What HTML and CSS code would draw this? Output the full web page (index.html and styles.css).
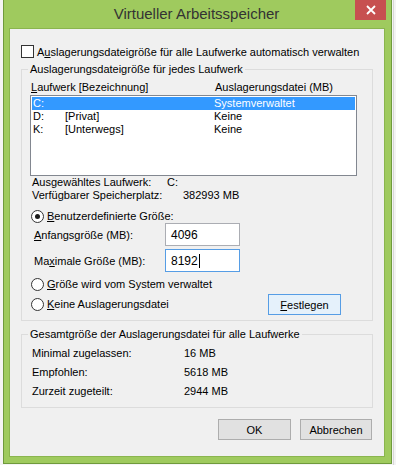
FILE: index.html
```html
<!DOCTYPE html>
<html lang="de">
<head>
<meta charset="utf-8">
<title>Virtueller Arbeitsspeicher</title>
<link rel="stylesheet" href="styles.css">
</head>
<body>
<div class="desk">
  <div class="window">
    <div class="titlebar">
      <div class="title">Virtueller Arbeitsspeicher</div>
      <div class="close"><svg width="10" height="10" viewBox="0 0 10 10"><path d="M1 1 L9 9 M9 1 L1 9" stroke="#fff" stroke-width="1.8" fill="none"/></svg></div>
    </div>
    <div class="client">
      <div class="autorow">
        <span class="checkbox"></span>
        <span>A<u>u</u>slagerungsdateigröße für alle Laufwerke automatisch verwalten</span>
      </div>

      <fieldset class="group g1">
        <legend>Auslagerungsdateigröße für jedes Laufwerk</legend>
        <div class="hdr"><span class="c1"><u>L</u>aufwerk [Bezeichnung]</span><span>Auslagerungsdatei (MB)</span></div>
        <div class="listbox">
          <div class="lrow sel"><span class="c1"><span class="drv">C:</span></span><span>Systemverwaltet</span></div>
          <div class="lrow"><span class="c1"><span class="drv">D:</span>[Privat]</span><span>Keine</span></div>
          <div class="lrow"><span class="c1"><span class="drv">K:</span>[Unterwegs]</span><span>Keine</span></div>
        </div>
        <div class="info"><span class="ilab1">Ausgewähltes Laufwerk:</span><span>C:</span></div>
        <div class="info"><span class="ilab2">Verfügbarer Speicherplatz:</span><span>382993 MB</span></div>
        <div class="radiorow r1"><span class="radio on"></span><span><u>B</u>enutzerdefinierte Größe:</span></div>
        <div class="tbrow"><span class="tblab"><u>A</u>nfangsgröße (MB):</span><span class="textbox">4096</span></div>
        <div class="tbrow t2"><span class="tblab">Ma<u>x</u>imale Größe (MB):</span><span class="textbox focus">8192<span class="caret"></span></span></div>
        <div class="radiorow r2"><span class="radio"></span><span><u>G</u>röße wird vom System verwaltet</span></div>
        <div class="lastrow">
          <div class="radiorow"><span class="radio"></span><span><u>K</u>eine Auslagerungsdatei</span></div>
          <div class="btn def"><u>F</u>estlegen</div>
        </div>
      </fieldset>

      <fieldset class="group g2">
        <legend>Gesamtgröße der Auslagerungsdatei für alle Laufwerke</legend>
        <div class="tot first"><span class="tlab">Minimal zugelassen:</span><span>16 MB</span></div>
        <div class="tot"><span class="tlab">Empfohlen:</span><span>5618 MB</span></div>
        <div class="tot"><span class="tlab">Zurzeit zugeteilt:</span><span>2944 MB</span></div>
      </fieldset>

      <div class="buttons">
        <div class="btn ok">OK</div>
        <div class="btn cancel">Abbrechen</div>
      </div>
    </div>
  </div>
  <div class="behind"></div>
</div>
</body>
</html>
```
FILE: styles.css
```css
html, body {
  margin: 0;
  padding: 0;
  background: #f4f4f4;
}
body {
  width: 396px;
  height: 465px;
  overflow: hidden;
  font-family: "Liberation Sans", Arial, sans-serif;
  font-size: 11px;
  color: #000;
}
.desk {
  display: flex;
  align-items: flex-start;
}
.window {
  margin-left: 3px;
  width: 390px;
  height: 464px;
  box-sizing: border-box;
  background: #9fca5e;
  border: 1px solid #6f9a3c;
  border-top: 0;
  padding: 0 6px 6px 5px;
}
.titlebar {
  display: grid;
  height: 28px;
  margin: 0 -6px 0 -5px;
}
.title, .close {
  grid-area: 1 / 1;
}
.title {
  text-align: center;
  font-size: 15px;
  line-height: 28px;
  color: #333;
  padding-right: 2px;
}
.close {
  justify-self: end;
  align-self: start;
  margin-right: 5px;
  width: 31px;
  height: 20px;
  background: #c75050;
  display: flex;
  align-items: center;
  justify-content: center;
}
.client {
  width: 376px;
  height: 429px;
  box-sizing: border-box;
  border: 1px solid #8ab54e;
  background: #f0f0f0;
}
.autorow {
  display: flex;
  align-items: center;
  height: 15px;
  margin-top: 15px;
  margin-left: 11px;
  white-space: nowrap;
}
.checkbox {
  width: 11px;
  height: 11px;
  border: 1px solid #333;
  background: #fff;
  margin-right: 3px;
}
.group {
  margin: 3px 0 0 11px;
  width: 352px;
  box-sizing: border-box;
  border: 1px solid #dcdcdc;
  padding: 0 0 5px 0;
  min-width: 0;
}
.group legend {
  margin-left: 6px;
  padding: 0 2px;
  line-height: 15px;
}
.hdr {
  display: flex;
  margin: 4px 0 0 9px;
  height: 13px;
  line-height: 13px;
}
.hdr .c1 {
  width: 184px;
}
.listbox {
  margin: 1px 0 0 8px;
  width: 327px;
  height: 81px;
  box-sizing: border-box;
  border: 1px solid #828790;
  background: #fff;
  padding: 1px;
}
.lrow {
  display: flex;
  height: 13px;
  line-height: 13px;
  padding-left: 1px;
}
.lrow .c1 {
  width: 181px;
  display: flex;
}
.lrow .drv {
  width: 32px;
}
.lrow.sel {
  background: #3399ff;
  color: #fff;
}
.info {
  display: flex;
  margin-left: 10px;
  height: 13px;
  line-height: 13px;
}
.info:first-of-type {
  margin-top: 5px;
}
.ilab1 { width: 135px; }
.ilab2 { width: 151px; }
.radiorow {
  display: flex;
  align-items: center;
  margin-left: 9px;
  height: 13px;
  line-height: 13px;
  white-space: nowrap;
}
.radio {
  width: 11px;
  height: 11px;
  border: 1px solid #333;
  border-radius: 50%;
  background: #fff;
  margin-right: 3px;
  display: flex;
  align-items: center;
  justify-content: center;
}
.radio.on::after {
  content: "";
  width: 5px;
  height: 5px;
  border-radius: 50%;
  background: #1a1a1a;
}
.r1 {
  margin-top: 7px;
  height: 14px;
}
.tbrow {
  display: flex;
  align-items: center;
  margin-left: 12px;
  height: 23px;
}
.tbrow.t2 {
  margin-top: 3px;
}
.tblab {
  width: 131px;
}
.textbox {
  width: 75px;
  height: 23px;
  box-sizing: border-box;
  border: 1px solid #abadb3;
  background: #fff;
  padding-left: 5px;
  display: flex;
  align-items: center;
  font-size: 12px;
}
.textbox.focus {
  border-color: #569de5;
}
.caret {
  width: 1px;
  height: 14px;
  background: #000;
  margin-left: 1px;
}
.r2 {
  margin-top: 6px;
}
.lastrow {
  display: grid;
  grid-template-columns: 246px 73px;
  align-items: center;
  height: 21px;
  margin-top: 3px;
}
.lastrow .radiorow {
  margin-left: 9px;
}
.btn {
  height: 21px;
  box-sizing: border-box;
  border: 1px solid #adadad;
  background: #e1e1e1;
  display: flex;
  align-items: center;
  justify-content: center;
}
.btn.def {
  border-color: #569de5;
  background: #e5f1fb;
}
.g2 {
  margin-top: 6px;
  padding-bottom: 6px;
}
.tot {
  display: flex;
  margin-left: 10px;
  height: 19px;
  line-height: 19px;
}
.tot.first {
  margin-top: 2px;
}
.tlab {
  width: 152px;
}
.buttons {
  display: flex;
  justify-content: flex-end;
  gap: 9px;
  margin: 11px 12px 0 0;
}
.btn.ok { width: 73px; }
.btn.cancel { width: 72px; }
.behind {
  margin-left: 1px;
  width: 2px;
  height: 465px;
  border-left: 1px solid #d8d8d8;
}
```
